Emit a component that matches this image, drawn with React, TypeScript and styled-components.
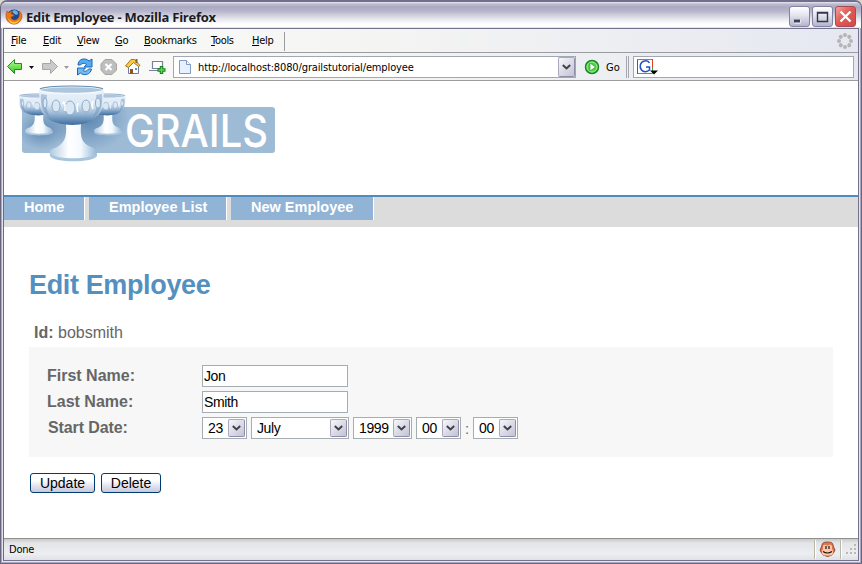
import React from "react";
import styled, { createGlobalStyle } from "styled-components";

const Global = createGlobalStyle`
  * { box-sizing: border-box; }
  body { margin: 0; overflow: hidden; background: #d8d8cc; }
  button, input { font: inherit; }
`;
const ui = `"DejaVu Sans Condensed", "DejaVu Sans", sans-serif`;
const Window = styled.div`
  width: 862px; height: 564px; display: flex; flex-direction: column;
  border: 1px solid #68667f; border-top: 2px solid #716f8d; border-radius: 7px 7px 0 0;
  background: #a9a7be; overflow: hidden; font: 11px ${ui}; color: #000;
`;
const TitleBar = styled.header`
  height: 26px; flex: none; display: flex; align-items: center; padding: 3px 4px 0 4px;
  background: linear-gradient(#e9e9f2 0, #bdbdd0 2px, #a9a9c2 5px, #b5b5ca 9px, #e6e6ee 17px, #fff 22px, #fff 25px);
`;
const Title = styled.h1`
  margin: 1px auto 0 3px; font: bold 13px/18px "Open Sans", sans-serif; letter-spacing: -0.25px; color: #1b1b24;
`;
const WinButtons = styled.div`display: flex; gap: 2px; padding-right: 1px;`;
const WinButton = styled.button<{ $close?: boolean }>`
  width: 21px; height: 21px; padding: 0; border: 1px solid ${p => p.$close ? "#a54b56" : "#8183a0"}; border-radius: 3px; display: grid; place-items: center;
  background: ${p => p.$close ? "linear-gradient(135deg, #f5a19b, #e05b53 45%, #d6474b)" : "linear-gradient(#fff, #e6e7f0 40%, #b4b5cc)"};
`;
const Inner = styled.div`
  flex: 1; min-height: 0; margin: 0 2px 2px; border: 1px solid #74728d; border-left-color: #6d6b84; background: #fff; display: flex; flex-direction: column;
  outline: 1px solid #e4e3ee;
`;
const MenuBar = styled.nav`
  height: 24px; flex: none; display: flex; align-items: center; border-bottom: 1px solid #9b9ba0; padding-top: 1px;
  background: linear-gradient(90deg, #fbfbf8 0, #f4f4f3 45%, #e5e8f1 100%);
`;
const MenuItem = styled.span<{ $w: number; $s?: number }>`
  width: ${p => p.$w}px; flex: none; white-space: nowrap; letter-spacing: ${p => p.$s ?? -0.3}px; line-height: 22px;
  u { text-decoration-thickness: 1px; text-underline-offset: 1px; }
`;
const MenuItems = styled.div`display: flex; padding-left: 7px; width: 281px; height: 19px; align-items: center; border-right: 1px solid #9b9ba0;`;
const Throbber = styled.svg`margin: 0 5px 0 auto;`;
const ToolBar = styled.div`
  height: 28px; flex: none; display: flex; align-items: center; border-bottom: 1px solid #9b9ba0;
  background: linear-gradient(90deg, #fbfbf8 0, #f4f4f3 45%, #e5e8f1 100%);
`;
const Tools = styled.svg`flex: none;`;
const AddressBox = styled.div`
  width: 403px; height: 22px; flex: none; border: 1px solid #a0a8b4; background: #fff; display: flex; align-items: center; padding-left: 4px;
`;
const Address = styled.span`margin-left: 6px; flex: 1; letter-spacing: -0.13px; padding-top: 1px;`;
const Arrow = styled.span<{ $h: number; $w: number }>`
  flex: none; width: ${p => p.$w}px; height: ${p => p.$h}px; border: 1px solid #aaa9be; border-right-color: #8e8ea9; border-bottom-color: #8e8ea9; border-radius: 2px;
  background: linear-gradient(135deg, #f7f7fb, #d9d9e6 55%, #c2c2d5); display: grid; place-items: center;
`;
const GoText = styled.span`margin: 2px 5px 0 6px; width: 15px;`;
const Divider = styled.span`width: 3px; height: 22px; border: solid #a5a6b0; border-width: 0 1px; flex: none;`;
const SearchBox = styled.div`width: 221px; height: 22px; margin-left: 4px; border: 1px solid #a0a8b4; background: #fff; padding: 2px 3px;`;
const Page = styled.main`flex: 1; min-height: 0; background: #fff; font-family: "Liberation Sans", Arial, sans-serif; color: #666;`;
const LogoArea = styled.div`height: 114px; padding-left: 10px;`;
const Nav = styled.nav`height: 32px; border-top: 2px solid #4f8cbe; background: #dcdcdc; display: flex; gap: 4px;`;
const NavItem = styled.a<{ $w: number }>`
  width: ${p => p.$w}px; height: 23px; background: #91b3d5; border-right: 1px solid #fff; padding-left: 20px;
  color: #fff; font: bold 14.5px/21px "Liberation Sans", sans-serif; letter-spacing: 0; white-space: nowrap;
`;
const Body = styled.section`padding: 42px 25px 0;`;
const Heading = styled.h2`margin: 0; height: 53px; font-size: 27px; line-height: 32px; color: #5490bf; letter-spacing: -0.36px;`;
const IdLine = styled.div`height: 25px; padding-left: 5px; font-size: 16px; line-height: 21px;`;
const Form = styled.div`height: 110px; background: #f7f7f7; padding: 18px; display: flex; flex-direction: column; gap: 4px;`;
const Row = styled.div`height: 22px; display: flex; align-items: center; gap: 4px;`;
const Label = styled.label<{ $indent?: number; $s?: number }>`
  width: 151px; flex: none; padding-left: ${p => p.$indent ?? 0}px; font: bold 16px/20px "Liberation Sans", sans-serif; letter-spacing: ${p => p.$s ?? 0}px;
`;
const Field = styled.input`width: 146px; height: 22px; border: 1px solid #a5acb2; background: #fff; padding: 0 1px; font-size: 14px; letter-spacing: -0.4px; color: #000; border-radius: 0;`;
const SelectBox = styled.button<{ $w: number }>`
  width: ${p => p.$w}px; height: 22px; border: 1px solid #a5acb2; background: #fff; display: flex; align-items: center; justify-content: space-between; padding: 0 1px 0 5px; font-size: 14px; letter-spacing: -0.4px; color: #000;
`;
const Colon = styled.span`width: 4px; font-size: 15px;`;
const Actions = styled.div`display: flex; gap: 6px; padding: 16px 0 0 1px;`;
const Action = styled.button<{ $w: number }>`
  width: ${p => p.$w}px; height: 20px; padding: 0; border: 1px solid #003c74; border-radius: 3px; font-size: 14px; line-height: 18px; color: #000; letter-spacing: 0;
  background: linear-gradient(#fff 35%, #e8e8f2 60%, #c8c8dc);
`;
const Status = styled.footer`
  height: 22px; flex: none; display: flex; align-items: center; border-top: 1px solid #918f8a; padding-left: 5px; letter-spacing: -0.2px;
  background: linear-gradient(#c9c9cc, #e3e5e9 4px, #edeef2 70%, #dfe1e8);
`;
const StatusIcon = styled.span`margin-left: auto; width: 27px; height: 19px; border: solid #b9b7a5; border-width: 0 1px; display: grid; place-items: center; box-shadow: 1px 0 #fff, inset 1px 0 #fff;`;
const Grip = styled.svg`margin-left: 3px;`;

const Chevron = () => (
  <svg width="9" height="6" viewBox="0 0 9 6"><path d="M.8 1.1 4.5 4.5 8.2 1.1" fill="none" stroke="#3f4048" strokeWidth="2" /></svg>
);
const Select = ({ w, children }: { w: number; children: React.ReactNode }) => (
  <SelectBox $w={w}><span>{children}</span><Arrow $w={17} $h={18}><Chevron /></Arrow></SelectBox>
);

const Fox = () => (
  <svg width="18" height="18" viewBox="0 0 18 18">
    <circle cx="9" cy="8.5" r="7" fill="#194a91" /><path d="M7 3c3-2 6 0 6 3-2 2-4 0-6-3Z" fill="#6ab5e8" />
    <path d="M2 3c-2 5-1 10 3 12 5 3 11 0 12-6 0-3-1-5-3-6 1 4 0 8-4 9-3 0-4-2-4-3l3-1c0-2-2-2-3-2 0-1 1-2 2-2-2-1-4 0-4 1Z" fill="#e87b1b" stroke="#ad471a" strokeWidth=".6" />
    <path d="M3 10c2 4 8 6 12 1-2 6-10 7-12-1Z" fill="#ffc43a" />
  </svg>
);

const ToolIcons = () => (
  <Tools width="169" height="27" viewBox="4 53 169 27">
    <defs><linearGradient id="gr" x2="0" y2="1"><stop stopColor="#b8ff96" /><stop offset="1" stopColor="#35c520" /></linearGradient></defs>
    <path d="M7.5 66.5 14.5 59.5v4h7v6h-7v4Z" fill="url(#gr)" stroke="#258b25" />
    <path d="M29 66h5l-2.5 3ZM29 66h5" fill="#111" />
    <path d="M57.5 66.5 50.5 59.5v4h-8v6h8v4Z" fill="#cacaca" stroke="#a6a6a6" />
    <path d="M64 66h5l-2.5 3Z" fill="#999" />
    <path d="M78 65c0-6 7-8 11-4l3-2v8h-8l2.5-2.5c-2.5-2-5-1-6 .5Z" fill="#55a9ed" stroke="#1768bd" />
    <path d="M91.500 69c-1 6-8 7-11 4l-3 2v-7h8l-2.500 2.500c2.500 1.500 4 .5 5.500-1.500Z" fill="#73bbf2" stroke="#1768bd" />
    <path d="M105 59.500h7l4.500 4.500v6l-4.500 4.500h-7l-4-4.500v-6Z" fill="#bebebe" stroke="#a5a5a5" />
    <path d="m105.500 64 6 6m0-6-6 6" stroke="#fff" strokeWidth="2.200" />
    <path d="M128.500 65.500v8h10v-8l-5-5Z" fill="#fcfcff" stroke="#6d7c9d" />
    <path d="M125.500 66 131 59.500h3.500l5.500 6-1.500 1-5-4-5 5Z" fill="#f7cc48" stroke="#a87517" />
    <path d="M136.500 59v4" stroke="#8a6424" strokeWidth="2" /><path d="M130 69h3v5h-3Z" fill="#8f551f" /><path d="M135 68h2v2h-2Z" fill="#5f91d0" />
    <path d="M152.500 61.500h10v7h-10ZM149 70.500h10" fill="#fff" stroke="#77849b" strokeWidth="1.200" />
    <path d="M161.500 66v8m-4-4h8" stroke="#168023" strokeWidth="3.500" /><path d="M161.500 67v6m-3-3h6" stroke="#5bd84d" strokeWidth="1.500" />
  </Tools>
);

const Cup = () => (
  <g>
    <path d="M27 38C28 52 25 58 16 62 9 64 11 67 11 69 13 76 57 76 58 69 58 66 57 63 52 61 43 57 41 52 42 38Z" fill="url(#stem)" />
    <path d="M11 67C14 74 54 74 58 67v3C55 77 14 77 11 70Z" fill="#a8c5de" />
    <path d="M0 4C1 11-1 25 7 31 16 41 49 42 57 31 66 25 64 11 65 4Z" fill="url(#bowl)" />
    <path d="M2 8C1 20 4 27 11 31 7 25 7 16 8 9ZM63 8C64 20 61 27 54 31 58 25 58 16 57 9Z" fill="#5c87b3" opacity=".4" />
    <ellipse cx="32.500" cy="4" rx="31.500" ry="3.500" fill="#adc6dd" stroke="#f3f8fd" strokeWidth="1.500" />
    <path d="M1 3C8-1 57-1 64 3" fill="none" stroke="#638bb4" strokeWidth="1.200" />
    <g fill="#dbe8f4" stroke="#82a5c6" strokeWidth=".9"><ellipse cx="6" cy="17" rx="2" ry="5" /><ellipse cx="17" cy="20" rx="4" ry="6" /><ellipse cx="31" cy="22" rx="5" ry="7" /><ellipse cx="47" cy="20" rx="4" ry="6" /><ellipse cx="59" cy="17" rx="2.500" ry="5" /></g>
    <path d="M24 18q0-4 2 0v7m13-8q-2 4 0 9m15-11q-2 4 0 8" fill="none" stroke="#fff" strokeWidth="1.500" />
  </g>
);

const Logo = () => (
  <svg width="264" height="90" viewBox="14 81 264 90">
    <defs>
      <linearGradient id="bowl" x2="0" y2="1"><stop stopColor="#e9f2fa" /><stop offset=".42" stopColor="#dce8f3" /><stop offset=".7" stopColor="#93b3d2" /><stop offset="1" stopColor="#3d6d9f" /></linearGradient>
      <linearGradient id="stem"><stop stopColor="#b0cae1" /><stop offset=".4" stopColor="#fff" /><stop offset=".65" stopColor="#f5faff" /><stop offset="1" stopColor="#94b5d2" /></linearGradient>
      <radialGradient id="shade"><stop stopColor="#3c6c9e" stopOpacity=".65" /><stop offset="1" stopColor="#3c6c9e" stopOpacity="0" /></radialGradient>
      <clipPath id="plate"><rect x="22" y="107" width="253" height="46" rx="3" /></clipPath>
    </defs>
    <rect x="22" y="107" width="253" height="46" rx="3" fill="#9ebbd6" />
    <g clipPath="url(#plate)"><ellipse cx="88" cy="118" rx="42" ry="34" fill="url(#shade)" /><ellipse cx="42" cy="130" rx="25" ry="20" fill="url(#shade)" /></g>
    <g transform="translate(19 94) scale(.58 .55)"><Cup /></g>
    <g transform="translate(88 94) scale(.58 .55)"><Cup /></g>
    <g transform="translate(39 86)"><Cup /></g>
    <text x="125" y="147" textLength="143" lengthAdjust="spacingAndGlyphs" fontFamily="Inter, sans-serif" fontSize="45" fontWeight="500" fill="#fff">GRAILS</text>
  </svg>
);

export default function App() {
  return (
    <><Global /><Window>
      <TitleBar><Fox /><Title>Edit Employee - Mozilla Firefox</Title>
        <WinButtons>
          <WinButton aria-label="Minimize"><svg width="19" height="19"><path d="M4.500 14.500h6" stroke="#fff" strokeWidth="4" /><path d="M4 14h6" stroke="#3f4056" strokeWidth="3" /></svg></WinButton>
          <WinButton aria-label="Maximize"><svg width="19" height="19"><path d="M4.500 5.500h10v9h-10ZM4 6h11" fill="none" stroke="#34354a" strokeWidth="1.400" /></svg></WinButton>
          <WinButton $close aria-label="Close"><svg width="19" height="19"><path d="m4.500 4.500 10 10m0-10-10 10" stroke="#fff" strokeWidth="2.400" /></svg></WinButton>
        </WinButtons>
      </TitleBar>
      <Inner>
        <MenuBar><MenuItems>
          <MenuItem $w={32}><u>F</u>ile</MenuItem><MenuItem $w={34}><u>E</u>dit</MenuItem><MenuItem $w={38}><u>V</u>iew</MenuItem><MenuItem $w={29}><u>G</u>o</MenuItem><MenuItem $w={67}><u>B</u>ookmarks</MenuItem><MenuItem $w={41}><u>T</u>ools</MenuItem><MenuItem $w={28}><u>H</u>elp</MenuItem>
        </MenuItems>
          <Throbber width="16" height="16"><g fill="#b5b5b5">{[0, 1, 2, 3, 4, 5, 6, 7].map(i => <circle key={i} cx="8" cy="2" r="2" transform={`rotate(${i * 45} 8 8)`} />)}</g></Throbber>
        </MenuBar>
        <ToolBar><ToolIcons />
          <AddressBox>
            <svg width="14" height="16"><path d="M1.500 1.500h7l4 4v9h-11Z" fill="#e6f0ff" stroke="#7f9ac6" /><path d="M8.500 1.500v4h4" fill="#fff" stroke="#7f9ac6" /></svg>
            <Address>http://localhost:8080/grailstutorial/employee</Address><Arrow $w={17} $h={20}><Chevron /></Arrow>
          </AddressBox>
          <svg width="24" height="16"><circle cx="16" cy="8" r="6.500" fill="#52cf43" stroke="#168a25" strokeWidth="1.500" /><circle cx="16" cy="8" r="5" fill="none" stroke="#a5ec98" /><path d="m14 4 5.500 4-5.500 4Z" fill="#fff" stroke="#1b9427" strokeWidth=".6" /></svg>
          <GoText>Go</GoText><Divider />
          <SearchBox><svg width="24" height="17"><path d="M.5.500h15v14H.5Z" fill="#fff" stroke="#3aac49" /><path d="M.5 15V.500" fill="none" stroke="#2d5fd1" /><path d="M15.500 0v9" stroke="#e43b2d" /><path d="M12.500 4c-1-2-3-2.500-5-2C3 3 2 8 4.500 11c2 2.500 6 2 8 0V8H9" fill="none" stroke="#254fbe" strokeWidth="1.500" /><path d="M13 11.500h8l-4 4Z" fill="#000" /></svg></SearchBox>
        </ToolBar>
        <Page>
          <LogoArea><Logo /></LogoArea>
          <Nav><NavItem $w={81}>Home</NavItem><NavItem $w={138}>Employee List</NavItem><NavItem $w={143}>New Employee</NavItem></Nav>
          <Body>
            <Heading>Edit Employee</Heading>
            <IdLine><b>Id:</b> bobsmith</IdLine>
            <Form>
              <Row><Label>First Name:</Label><Field defaultValue="Jon" /></Row>
              <Row><Label>Last Name:</Label><Field defaultValue="Smith" /></Row>
              <Row><Label $indent={1} $s={-0.1}>Start Date:</Label><Select w={45}>23</Select><Select w={98}>July</Select><Select w={59}>1999</Select><Select w={45}>00</Select><Colon>:</Colon><Select w={45}>00</Select></Row>
            </Form>
            <Actions><Action $w={65}>Update</Action><Action $w={60}>Delete</Action></Actions>
          </Body>
        </Page>
        <Status>Done
          <StatusIcon><svg width="17" height="17" viewBox="0 0 17 17"><path d="M3 4q0-3 5.500-3T14 4l1 3q2 2 0 4l-2 3q-4 3-9 0l-2-3q-2-2 0-4Z" fill="#d9774f" stroke="#8a3a1d" strokeWidth=".8" /><path d="M4 5q2-2.500 4.500 0 2.500-2.500 4.500 0v3q3 5-1 6.500H5Q1 13 4 8Z" fill="#ffc5a8" /><path d="M7 5v3m3-3v3M4 10.500q4.500 3 9 0" fill="none" stroke="#21130f" strokeWidth="1.200" /></svg></StatusIcon>
          <Grip width="14" height="16"><g fill="#bbb9ad"><path d="M10 2h2v2h-2zM6 6h2v2H6zM10 6h2v2h-2zM2 10h2v2H2zM6 10h2v2H6zM10 10h2v2h-2z" /></g></Grip>
        </Status>
      </Inner>
    </Window></>
  );
}
